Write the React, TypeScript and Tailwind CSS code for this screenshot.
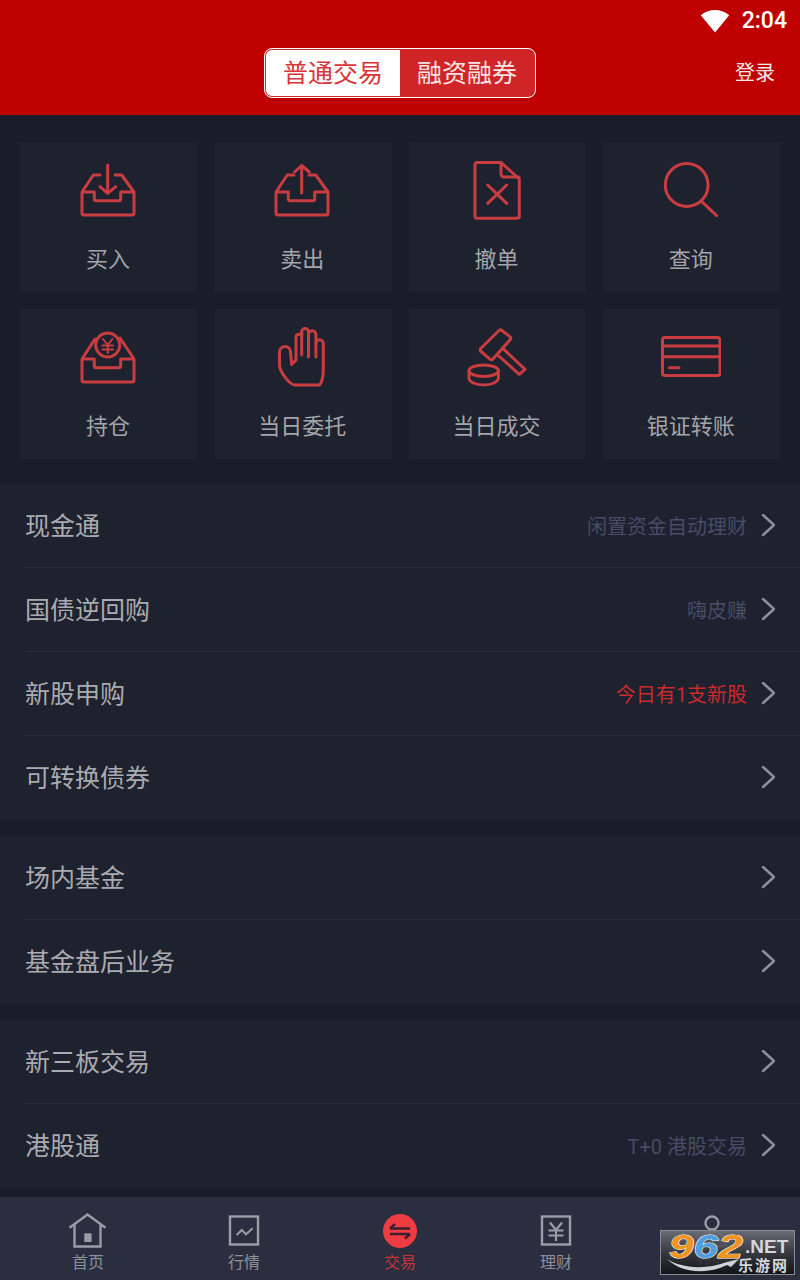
import React from 'react';

const FONT = "font-['Roboto','Noto_Sans_CJK_SC',sans-serif]";

const Tray = () => (
  <path d="M4 32V53a2 2 0 0 0 2 2H54a2 2 0 0 0 2-2V32H42.7V38.7a2 2 0 0 1-2 2H18.3a2 2 0 0 1-2-2V32ZM4 32 15.3 15H22M37 15H43.7L56 32" />
);

const Ico = ({ children }: { children: React.ReactNode }) => (
  <svg width="60" height="60" viewBox="0 0 60 60" fill="none" stroke="#c93d41" strokeWidth="3" strokeLinecap="round" strokeLinejoin="round">
    {children}
  </svg>
);

const icons: Record<string, React.ReactNode> = {
  buy: (
    <Ico>
      <Tray />
      <path d="M29.7 5V33M22 26.7l7.7 6.6 8-6.6" />
    </Ico>
  ),
  sell: (
    <Ico>
      <Tray />
      <path d="M29.7 33V5.5M22.5 12l7.2-6.5 7.6 6.5" />
    </Ico>
  ),
  cancel: (
    <Ico>
      <path d="M10 2.5H34L52.3 19V56.3a2 2 0 0 1-2 2H10a2 2 0 0 1-2-2V4.5a2 2 0 0 1 2-2Z" />
      <path d="M34 2.5V14a3 3 0 0 0 3 3H52M20.7 25 39.7 43.3M39.7 25 20.7 43.3" />
    </Ico>
  ),
  search: (
    <Ico>
      <circle cx="25.7" cy="25" r="21.4" />
      <path d="M40.7 41.7 55.7 55.7" />
    </Ico>
  ),
  hold: (
    <Ico>
      <path d="M4 32V53a2 2 0 0 0 2 2H54a2 2 0 0 0 2-2V32H42.7V38.7a2 2 0 0 1-2 2H18.3a2 2 0 0 1-2-2V32ZM4 32 17 12M56 32 42 11" />
      <circle cx="29.7" cy="18" r="12" />
      <path strokeWidth="2" d="M25 12l4.7 6 4.7-6M24.5 18.5H35M24.5 22.5H35M29.7 18V26" />
    </Ico>
  ),
  hand: (
    <Ico>
      <path d="M23 58H47C49 58 51.3 50 51.3 44V16.5A3.7 3.7 0 0 0 43.9 16.5V7.5A3.7 3.7 0 0 0 36.5 7.5V5A3.4 3.4 0 0 0 29.7 5V9.5A2.9 2.9 0 0 0 24 9.5V33L19.7 37.5 18.5 25A5.5 5.5 0 0 0 7.5 25V38C7.5 45 18 58 23 58Z" />
      <path d="M29.7 5V28M36.5 7V30M43.9 16.5V30" />
    </Ico>
  ),
  deal: (
    <Ico>
      <path d="M32 3.5a2 2 0 0 1 2.5-.3L43 9.6a2 2 0 0 1 .3 3L26 32a2 2 0 0 1-2.7.3L14 24.5a2 2 0 0 1-.3-3Z" />
      <path d="M35.7 21.3 58 42.3 52.3 47.3 30.7 28" />
      <ellipse cx="16.7" cy="43.7" rx="14.7" ry="5.7" />
      <path d="M2 44V51C2 55 9 58 16.7 58S31.4 55 31.4 51V44" />
    </Ico>
  ),
  card: (
    <Ico>
      <rect x="1.5" y="10.5" width="57.5" height="38" rx="2.5" />
      <path d="M1.5 19H59M1.5 29.7H59M8.5 40.7H18" />
    </Ico>
  ),
};

const grid = [
  ['买入', 'buy'],
  ['卖出', 'sell'],
  ['撤单', 'cancel'],
  ['查询', 'search'],
  ['持仓', 'hold'],
  ['当日委托', 'hand'],
  ['当日成交', 'deal'],
  ['银证转账', 'card'],
];

type Row = { label: string; hint?: string; red?: boolean };

const sections: Row[][] = [
  [
    { label: '现金通', hint: '闲置资金自动理财' },
    { label: '国债逆回购', hint: '嗨皮赚' },
    { label: '新股申购', hint: '今日有1支新股', red: true },
    { label: '可转换债券' },
  ],
  [{ label: '场内基金' }, { label: '基金盘后业务' }],
  [{ label: '新三板交易' }, { label: '港股通', hint: 'T+0 港股交易' }],
];

const Chevron = () => (
  <svg width="14" height="24" viewBox="0 0 14 24" fill="none" stroke="#8e9097" strokeWidth="2.4" strokeLinecap="round" strokeLinejoin="round">
    <path d="M2 1 13 11 2 21" />
  </svg>
);

const Wifi = () => (
  <svg width="30" height="24" viewBox="0 0 30 24" fill="#fff">
    <path d="M15 23.5 .8 6.2C4.5 3 9.5 1 15 1s10.5 2 14.2 5.2Z" />
  </svg>
);

const TabIcon = ({ children }: { children: React.ReactNode }) => (
  <svg width="40" height="40" viewBox="0 0 40 40" fill="none" stroke="#9a9ca6" strokeWidth="2.4">
    {children}
  </svg>
);

const tabs: { label: string; active?: boolean; icon: React.ReactNode }[] = [
  {
    label: '首页',
    icon: (
      <TabIcon>
        <path d="M1.5 15.7 19.5 2.5 37.5 15.7" />
        <path d="M6.5 13V34.5H32.5V13" />
        <rect x="16.3" y="21.3" width="7.3" height="8.7" fill="#9a9ca6" stroke="none" />
      </TabIcon>
    ),
  },
  {
    label: '行情',
    icon: (
      <TabIcon>
        <rect x="6" y="4.5" width="28" height="28" />
        <path d="M12.7 23 17.7 18 22 22.3 28.7 16.3" strokeWidth="2" />
      </TabIcon>
    ),
  },
  {
    label: '交易',
    active: true,
    icon: (
      <svg width="40" height="40" viewBox="0 0 40 40" fill="none">
        <circle cx="20" cy="19" r="17" fill="#ee3d42" />
        <path d="M10 16.5H30M10 16.5l5-4.5M30 22H10M30 22l-5 4.5" stroke="#3a2030" strokeWidth="2.4" />
      </svg>
    ),
  },
  {
    label: '理财',
    icon: (
      <TabIcon>
        <rect x="6" y="4.5" width="28" height="28" />
        <path d="M14 10.5l6 7.5 6-7.5M12.5 18.5H27.5M12.5 23.5H27.5M20 18V29" strokeWidth="2.2" />
      </TabIcon>
    ),
  },
  {
    label: '我的',
    icon: (
      <TabIcon>
        <circle cx="20" cy="11" r="6.5" />
        <path d="M6 34C6 25 12 20 20 20s14 5 14 14Z" />
      </TabIcon>
    ),
  },
];

const Watermark = () => (
  <div className="absolute left-[660px] top-[1230px] h-[45px] w-[135px] border border-[#8a8d94] bg-gradient-to-b from-[#6d7077ee] via-[#3a3c42e0] to-[#101114e6] font-['Liberation_Sans',sans-serif]">
    <svg className="absolute left-[6px] top-[28px]" width="72" height="16" viewBox="0 0 72 16" fill="#d0d2d6">
      <path d="M0 0C12 8 36 12 60 3L72 0 64 8 60 6C40 16 14 14 0 0Z" />
    </svg>
    <div className="absolute left-[8px] top-0 origin-left scale-x-[1.3] text-[34px] font-bold italic leading-[30px] [-webkit-text-stroke:1px_#fff] [paint-order:stroke_fill]">
      <span className="text-[#ef9322]">9</span>
      <span className="text-[#4f9fdd]">6</span>
      <span className="text-[#ef9322]">2</span>
    </div>
    <div className="absolute left-[84px] top-[6px] text-[19px] font-bold leading-[20px] text-[#d5d7da]">.NET</div>
    <div className="absolute left-[77px] top-[25px] font-['Noto_Sans_CJK_SC',sans-serif] text-[15px] font-bold leading-[18px] tracking-[2px] text-[#d5d7da]">乐游网</div>
  </div>
);

const App = () => {
  return (
    <div className={`relative flex h-[1280px] w-[800px] flex-col overflow-hidden bg-[#191c2a] ${FONT}`}>
      <header className="h-[115px] bg-[#bf0000]">
        <div className="flex h-[42px] items-center justify-end pr-[13px]">
          <Wifi />
          <span className="ml-[12px] text-[23px] font-medium text-white">2:04</span>
        </div>
        <div className="mt-[6px] grid grid-cols-[1fr_auto_1fr] items-center">
          <div />
          <div className="flex h-[50px] w-[272px] overflow-hidden rounded-lg border border-white bg-[#d02528] p-px text-[25px]">
            <div className="flex w-[134px] items-center justify-center rounded-l-[6px] bg-white pt-px text-[#d8353a]">普通交易</div>
            <div className="flex flex-1 items-center justify-center pt-px text-[#f8e4e4]">融资融券</div>
          </div>
          <div className="justify-self-end pr-[25px] text-[20px] text-[#f7e6e6]">登录</div>
        </div>
      </header>

      <div className="grid grid-cols-4 gap-[17px] px-5 pt-[27px] pb-[25px]">
        {grid.map(([label, icon]) => (
          <div key={label} className="flex h-[150px] flex-col items-center bg-[#1e212e] pt-[18px] pr-px">
            {icons[icon]}
            <div className="mt-[24px] text-[22px] leading-[32px] text-[#a3a5aa]">{label}</div>
          </div>
        ))}
      </div>

      <div className="flex flex-col gap-4">
        {sections.map((rows, i) => (
          <div key={i} className="bg-[#1e212e] pl-[25px]">
            {rows.map((row, j) => (
              <div key={row.label} className={`flex h-[84px] items-center pr-[25px] ${j < rows.length - 1 ? 'border-b border-[#2a2d3a]' : ''}`}>
                <span className="mt-[2px] text-[25px] text-[#a9abb0]">{row.label}</span>
                <span className={`ml-auto mr-[14px] mt-[2px] text-[20px] ${row.red ? 'text-[#c92a2c]' : 'text-[#474c68]'}`}>{row.hint}</span>
                <Chevron />
              </div>
            ))}
          </div>
        ))}
      </div>

      <nav className="mt-auto grid h-[83px] grid-cols-5 bg-[#2a2e3e] px-[10px] pt-[15px]">
        {tabs.map(tab => (
          <div key={tab.label} className="flex flex-col items-center">
            {tab.icon}
            <span className={`mt-px text-[16px] leading-[20px] ${tab.active ? 'text-[#c8343a]' : 'text-[#8e9098]'}`}>{tab.label}</span>
          </div>
        ))}
      </nav>

      <Watermark />
    </div>
  );
};

export default App;
